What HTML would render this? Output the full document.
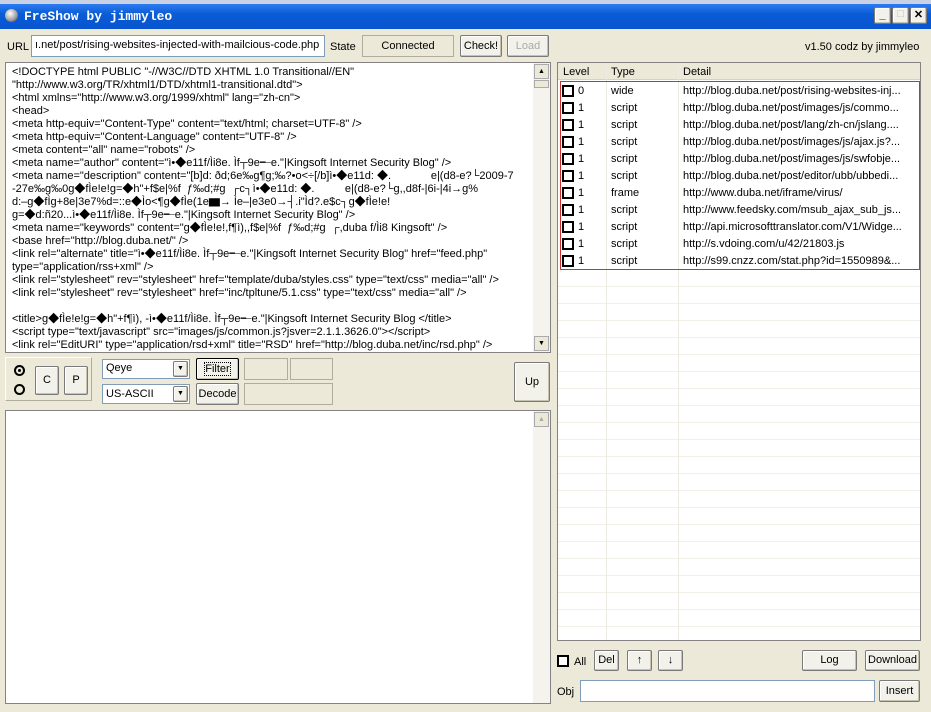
<!DOCTYPE html>
<html><head><meta charset="utf-8"><style>
*{box-sizing:border-box;margin:0;padding:0}
body{width:931px;height:712px;overflow:hidden;background:#ece9d8;font:11px "Liberation Sans","Noto Sans CJK SC",sans-serif;color:#000;position:relative}
.a{position:absolute}
.btn{position:absolute;background:#f2f1ea;border:1px solid #7a7a7a;border-radius:2px;text-align:center;font-size:11px;box-shadow:inset -1px -1px 0 #c5c2b2,inset 1px 1px 0 #fff}
.in{position:absolute;background:#fff;border:1px solid #7f9db9}
.sunk{position:absolute;border:1px solid #b0ad9e;background:#ece9d8}
.ta{position:absolute;background:#fff;border:1px solid #848284;overflow:hidden}
.ta pre{font:11px/13px "Liberation Sans","Noto Sans CJK SC",sans-serif;padding:3px 0 0 6px;white-space:pre}
.sb{position:absolute;right:0;top:0;bottom:0;width:17px;background:#f4f3ee}
.ar{position:absolute;left:1px;width:15px;height:15px;background:#ece9d8;border:1px solid #aaa;font-size:7px;text-align:center;line-height:13px}
.row{position:absolute;left:0;width:362px;height:17px;font-size:11px;line-height:17px}
.row span{position:absolute}
.cb{position:absolute;width:12px;height:12px;border:2px solid #000;background:#fff}
</style></head><body>
<div class="a" style="left:0;top:0;width:931px;height:4px;background:#c8d2e4"></div>
<div class="a" style="left:0;top:4px;width:931px;height:25px;background:linear-gradient(#2d7bf0,#0a5cd6 40%,#0854cf)"></div>
<div class="a" style="left:5px;top:9px;width:13px;height:13px;border-radius:50%;background:radial-gradient(circle at 40% 35%,#fff,#999 60%,#222)"></div>
<div class="a" style="left:24px;top:9px;color:#fff;font:bold 13px 'Liberation Mono',monospace">FreShow by jimmyleo</div>
<div class="btn" style="left:874px;top:7px;width:17px;height:17px;line-height:14px;font-weight:bold">_</div>
<div class="btn" style="left:892px;top:7px;width:17px;height:17px;color:#bbb">□</div>
<div class="btn" style="left:910px;top:7px;width:17px;height:17px;font-weight:bold;line-height:15px">✕</div>

<div class="a" style="left:7px;top:41px">URL</div>
<div class="in" style="left:31px;top:35px;width:294px;height:22px;padding:3px 0 0 3px;white-space:nowrap;overflow:hidden">ı.net/post/rising-websites-injected-with-mailcious-code.php</div>
<div class="a" style="left:330px;top:41px">State</div>
<div class="sunk" style="left:362px;top:35px;width:92px;height:22px;text-align:center;line-height:20px">Connected</div>
<div class="btn" style="left:460px;top:35px;width:42px;height:22px;line-height:20px">Check!</div>
<div class="btn" style="left:507px;top:35px;width:42px;height:22px;line-height:20px;color:#aaa">Load</div>
<div class="a" style="left:805px;top:41px">v1.50 codz by jimmyleo</div>

<div class="ta" style="left:5px;top:62px;width:546px;height:291px"><pre>&lt;!DOCTYPE html PUBLIC "-//W3C//DTD XHTML 1.0 Transitional//EN"
"http://www.w3.org/TR/xhtml1/DTD/xhtml1-transitional.dtd"&gt;
&lt;html xmlns="http://www.w3.org/1999/xhtml" lang="zh-cn"&gt;
&lt;head&gt;
&lt;meta http-equiv="Content-Type" content="text/html; charset=UTF-8" /&gt;
&lt;meta http-equiv="Content-Language" content="UTF-8" /&gt;
&lt;meta content="all" name="robots" /&gt;
&lt;meta name="author" content="ì•◆e11f/Ìi8e. Ìf┬9e╾e."|Kingsoft Internet Security Blog" /&gt;
&lt;meta name="description" content="[b]d: ðd;6e‰g¶g;‰?•o&lt;÷[/b]ì•◆e11d: ◆.             e|(d8-e?└2009-7
-27e‰g‰0g◆fÌe!e!g=◆h"+f$e|%f  ƒ‰d;#g  ┌c┐ì•◆e11d: ◆.          e|(d8-e?└g,,d8f-|6i-|4i→g%
d:–g◆fÌg+8e|3e7%d=::e◆Ìo&lt;¶g◆fÌe(1e▆→ Ìe–|e3e0→┤.i"Ìd?.e$c┐g◆fÌe!e!
g=◆d:ñ20...ì•◆e11f/Ìi8e. Ìf┬9e╾e."|Kingsoft Internet Security Blog" /&gt;
&lt;meta name="keywords" content="g◆fÌe!e!,f¶ì),,f$e|%f  ƒ‰d;#g  ┌,duba f/Ìi8 Kingsoft" /&gt;
&lt;base href="http://blog.duba.net/" /&gt;
&lt;link rel="alternate" title="ì•◆e11f/Ìi8e. Ìf┬9e╾e."|Kingsoft Internet Security Blog" href="feed.php"
type="application/rss+xml" /&gt;
&lt;link rel="stylesheet" rev="stylesheet" href="template/duba/styles.css" type="text/css" media="all" /&gt;
&lt;link rel="stylesheet" rev="stylesheet" href="inc/tpltune/5.1.css" type="text/css" media="all" /&gt;

&lt;title&gt;g◆fÌe!e!g=◆h"+f¶ì), -ì•◆e11f/Ìi8e. Ìf┬9e╾e."|Kingsoft Internet Security Blog &lt;/title&gt;
&lt;script type="text/javascript" src="images/js/common.js?jsver=2.1.1.3626.0"&gt;&lt;/script&gt;
&lt;link rel="EditURI" type="application/rsd+xml" title="RSD" href="http://blog.duba.net/inc/rsd.php" /&gt;</pre>
<div class="sb"><div class="ar" style="top:1px">▲</div><div class="a" style="left:1px;top:17px;width:15px;height:8px;background:#ece9d8;border:1px solid #aaa"></div><div class="ar" style="bottom:1px">▼</div></div></div>

<div class="sunk" style="left:5px;top:357px;width:87px;height:44px;border-color:#fff #b0ad9e #b0ad9e #fff"></div>
<div class="a" style="left:14px;top:365px;width:11px;height:11px;border:2px solid #000;border-radius:50%"><div class="a" style="left:2px;top:2px;width:3px;height:3px;background:#000;border-radius:50%"></div></div>
<div class="a" style="left:14px;top:384px;width:11px;height:11px;border:2px solid #000;border-radius:50%"></div>
<div class="btn" style="left:35px;top:366px;width:24px;height:29px;line-height:27px">C</div>
<div class="btn" style="left:64px;top:366px;width:24px;height:29px;line-height:27px">P</div>
<div class="in" style="left:102px;top:359px;width:88px;height:20px;padding:2px 3px">Qeye<div class="btn" style="right:1px;top:1px;width:15px;height:16px;font-size:7px;line-height:14px">▼</div></div>
<div class="in" style="left:102px;top:384px;width:88px;height:20px;padding:3px 3px">US-ASCII<div class="btn" style="right:1px;top:1px;width:15px;height:16px;font-size:7px;line-height:14px">▼</div></div>
<div class="btn" style="left:196px;top:358px;width:43px;height:22px;line-height:20px;border-color:#000"><span style="outline:1px dotted #000">Filter</span></div>
<div class="btn" style="left:196px;top:383px;width:43px;height:22px;line-height:20px">Decode</div>
<div class="sunk" style="left:244px;top:358px;width:44px;height:22px"></div>
<div class="sunk" style="left:290px;top:358px;width:43px;height:22px"></div>
<div class="sunk" style="left:244px;top:383px;width:89px;height:22px"></div>
<div class="btn" style="left:514px;top:362px;width:36px;height:40px;line-height:38px">Up</div>

<div class="ta" style="left:5px;top:410px;width:546px;height:294px"><div class="sb"><div class="ar" style="top:1px;color:#aaa">▲</div></div></div>

<div class="ta" style="left:557px;top:62px;width:364px;height:579px">
<div class="a" style="left:0;top:0;width:362px;height:17px;background:#ece9d8;border-bottom:1px solid #d6d2c2"></div>
<div class="a" style="left:5px;top:3px">Level</div><div class="a" style="left:53px;top:3px">Type</div><div class="a" style="left:125px;top:3px">Detail</div>
<div class="a" style="left:48px;top:0;width:1px;height:577px;background:#eceae3"></div>
<div class="a" style="left:120px;top:0;width:1px;height:577px;background:#eceae3"></div>
<div class="a" style="left:2px;top:18px;width:360px;height:189px;border:1px solid #d03030"></div>
<div style="position:absolute;left:0;top:20px;width:362px">
<div class="row" style="top:0"><i class="cb" style="left:4px;top:2px"></i><span style="left:20px">0</span><span style="left:53px">wide</span><span style="left:125px">http://blog.duba.net/post/rising-websites-inj...</span></div>
<div class="row" style="top:17px"><i class="cb" style="left:4px;top:2px"></i><span style="left:20px">1</span><span style="left:53px">script</span><span style="left:125px">http://blog.duba.net/post/images/js/commo...</span></div>
<div class="row" style="top:34px"><i class="cb" style="left:4px;top:2px"></i><span style="left:20px">1</span><span style="left:53px">script</span><span style="left:125px">http://blog.duba.net/post/lang/zh-cn/jslang....</span></div>
<div class="row" style="top:51px"><i class="cb" style="left:4px;top:2px"></i><span style="left:20px">1</span><span style="left:53px">script</span><span style="left:125px">http://blog.duba.net/post/images/js/ajax.js?...</span></div>
<div class="row" style="top:68px"><i class="cb" style="left:4px;top:2px"></i><span style="left:20px">1</span><span style="left:53px">script</span><span style="left:125px">http://blog.duba.net/post/images/js/swfobje...</span></div>
<div class="row" style="top:85px"><i class="cb" style="left:4px;top:2px"></i><span style="left:20px">1</span><span style="left:53px">script</span><span style="left:125px">http://blog.duba.net/post/editor/ubb/ubbedi...</span></div>
<div class="row" style="top:102px"><i class="cb" style="left:4px;top:2px"></i><span style="left:20px">1</span><span style="left:53px">frame</span><span style="left:125px">http://www.duba.net/iframe/virus/</span></div>
<div class="row" style="top:119px"><i class="cb" style="left:4px;top:2px"></i><span style="left:20px">1</span><span style="left:53px">script</span><span style="left:125px">http://www.feedsky.com/msub_ajax_sub_js...</span></div>
<div class="row" style="top:136px"><i class="cb" style="left:4px;top:2px"></i><span style="left:20px">1</span><span style="left:53px">script</span><span style="left:125px">http://api.microsofttranslator.com/V1/Widge...</span></div>
<div class="row" style="top:153px"><i class="cb" style="left:4px;top:2px"></i><span style="left:20px">1</span><span style="left:53px">script</span><span style="left:125px">http://s.vdoing.com/u/42/21803.js</span></div>
<div class="row" style="top:170px"><i class="cb" style="left:4px;top:2px"></i><span style="left:20px">1</span><span style="left:53px">script</span><span style="left:125px">http://s99.cnzz.com/stat.php?id=1550989&amp;...</span></div>
</div>
<div class="a" style="left:0;top:207px;width:362px;height:370px;background:repeating-linear-gradient(#fff 0 16px,#f1efe8 16px 17px)"></div>
<div class="a" style="left:48px;top:207px;width:1px;height:370px;background:#eceae3"></div>
<div class="a" style="left:120px;top:207px;width:1px;height:370px;background:#eceae3"></div>
</div>

<i class="cb" style="left:557px;top:655px"></i><div class="a" style="left:574px;top:656px">All</div>
<div class="btn" style="left:594px;top:650px;width:25px;height:21px;line-height:19px">Del</div>
<div class="btn" style="left:627px;top:650px;width:25px;height:21px;line-height:19px">↑</div>
<div class="btn" style="left:658px;top:650px;width:25px;height:21px;line-height:19px">↓</div>
<div class="btn" style="left:802px;top:650px;width:55px;height:21px;line-height:19px">Log</div>
<div class="btn" style="left:865px;top:650px;width:55px;height:21px;line-height:19px">Download</div>
<div class="a" style="left:557px;top:686px">Obj</div>
<div class="in" style="left:580px;top:680px;width:295px;height:22px"></div>
<div class="btn" style="left:879px;top:680px;width:41px;height:22px;line-height:20px">Insert</div>
</body></html>
